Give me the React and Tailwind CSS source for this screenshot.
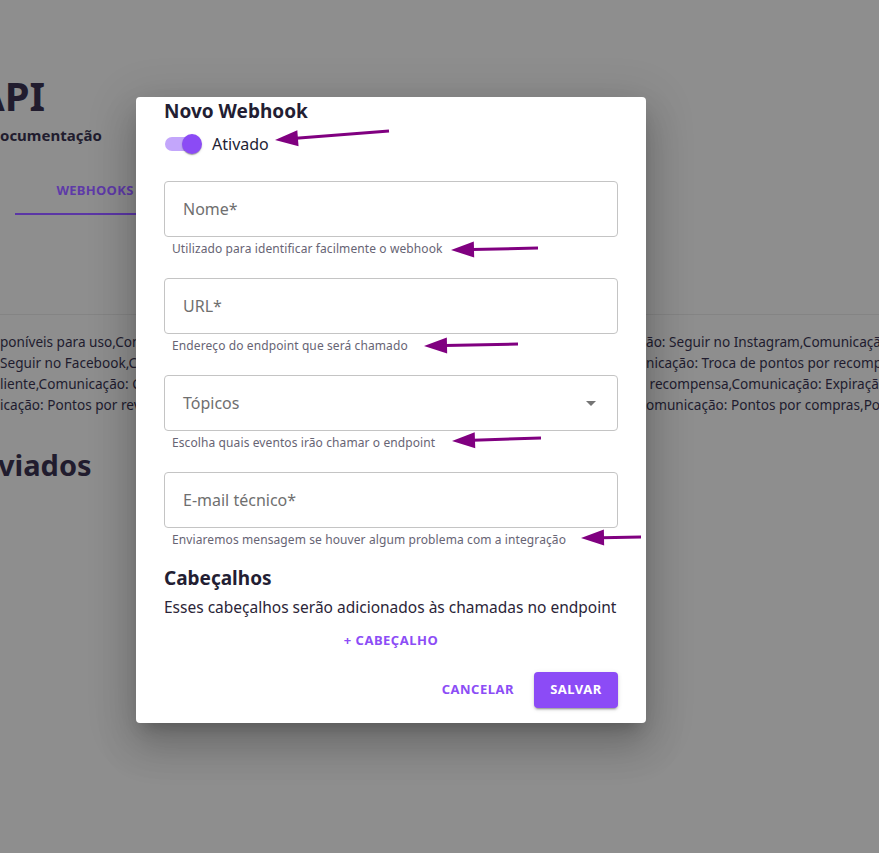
import React from 'react';

const lines = [
  ['poníveis para uso,Comunicação: Seguir no Twitter,Comunicação: Seguir no TikTok', 'ão: Seguir no Instagram,Comunicação: Seguir no TikTok'],
  ['Seguir no Facebook,Comunicação: Aniversário do cliente,Comunicação', 'nicação: Troca de pontos por recompensa'],
  ['liente,Comunicação: Cadastro de cliente,Comunicação: Troca', '\u00a0recompensa,Comunicação: Expiração de pontos'],
  ['icação: Pontos por revisão,Comunicação: Pontos por indicação', 'omunicação: Pontos por compras,Pontos'],
];

const fields = [
  { label: 'Nome*', help: 'Utilizado para identificar facilmente o webhook' },
  { label: 'URL*', help: 'Endereço do endpoint que será chamado' },
  { label: 'Tópicos', help: 'Escolha quais eventos irão chamar o endpoint', select: true },
  { label: 'E-mail técnico*', help: 'Enviaremos mensagem se houver algum problema com a integração' },
];

// annotation arrows drawn over the screenshot
const arrows = [
  [389, 131, 275, 140],
  [538, 248, 451, 250],
  [518, 344, 424, 346],
  [541, 438, 452, 441],
  [641, 537, 581, 538],
];

const Arrow = ({ x1, y1, x2, y2 }) => {
  const len = Math.hypot(x2 - x1, y2 - y1);
  const dx = (x2 - x1) / len;
  const dy = (y2 - y1) / len;
  const bx = x2 - dx * 23;
  const by = y2 - dy * 23;
  const px = -dy * 8;
  const py = dx * 8;
  const pts = `${x2},${y2} ${bx + px},${by + py} ${bx - px},${by - py}`;
  return (
    <g>
      <line x1={x1} y1={y1} x2={bx + dx * 2} y2={by + dy * 2} stroke="#800080" strokeWidth="3" />
      <polygon points={pts} fill="#800080" />
    </g>
  );
};

const Field = ({ label, help, select }) => (
  <div>
    <div className="flex h-[56px] items-center justify-between rounded border border-[#c4c4c4] pl-[18px] pr-[14px]">
      <span className="text-[16px] text-[#6f6f6f]">{label}</span>
      {select && (
        <svg viewBox="0 0 24 24" className="h-6 w-6 fill-[#757575]">
          <path d="M7 10l5 5 5-5z" />
        </svg>
      )}
    </div>
    <p className="mt-[2px] whitespace-nowrap pl-[8px] text-[12px] leading-[20px] tracking-[0.1px] text-[#676474]">{help}</p>
  </div>
);

const App = () => {
  return (
    <div className="relative h-[853px] w-full overflow-hidden bg-[#8e8e8e] font-['Noto_Sans',sans-serif] text-[#211c2e]">
      {/* Page behind the dialog */}
      <div className="pt-[72px]">
        <h1 className="-ml-[23px] whitespace-nowrap text-[40px] font-bold leading-[48px]">API</h1>
        <p className="mt-[5px] text-[15px] font-bold leading-[20px]">ocumentação</p>
        <div className="mt-[22px] ml-[15px] flex">
          <div className="flex h-[48px] w-[160px] items-center justify-center border-b-2 border-[#5b36a6] pt-[2px]">
            <span className="text-[13px] font-bold tracking-[0.3px] text-[#5e3aa8]">WEBHOOKS</span>
          </div>
        </div>
        <div className="mt-[99px] h-px bg-[#848484]" />
        <div className="mt-[16px] text-[13.6px] leading-[21px]">
          {lines.map(([left, right], i) => (
            <div key={i} className="grid grid-cols-[646px_1fr] whitespace-nowrap">
              <span className="overflow-hidden">{left}</span>
              <span className="overflow-hidden">{right}</span>
            </div>
          ))}
        </div>
        <h2 className="mt-[30px] -ml-[2px] text-[29px] font-bold leading-[40px]">viados</h2>
      </div>

      {/* Dialog */}
      <div className="absolute left-[136px] top-[97px] w-[510px] rounded bg-white px-[28px] pb-[15px] shadow-[0_11px_15px_-7px_rgba(0,0,0,0.2),0_24px_38px_3px_rgba(0,0,0,0.14),0_9px_46px_8px_rgba(0,0,0,0.12)]">
        <h3 className="text-[19px] font-bold leading-[28px] text-[#231e33]">Novo Webhook</h3>
        <div className="flex h-[38px] items-center">
          <div className="relative ml-[1px] h-[14px] w-[34px] rounded-full bg-[#c3a6fb]">
            <div className="absolute -top-[3px] left-[17px] h-[20px] w-[20px] rounded-full bg-[#8b4bf5] shadow-[0_2px_1px_-1px_rgba(0,0,0,0.2),0_1px_1px_0_rgba(0,0,0,0.14),0_1px_3px_0_rgba(0,0,0,0.12)]" />
          </div>
          <span className="ml-[13px] text-[16px] text-[#231e33]">Ativado</span>
        </div>

        <div className="mt-[18px] flex flex-col gap-[19px]">
          {fields.map((f) => (
            <Field key={f.label} {...f} />
          ))}
        </div>

        <h3 className="mt-[14px] text-[19px] font-bold leading-[28px] text-[#231e33]">Cabeçalhos</h3>
        <p className="mt-[3px] whitespace-nowrap text-[15.5px] leading-[24px] text-[#2b2538]">
          Esses cabeçalhos serão adicionados às chamadas no endpoint
        </p>
        <div className="mt-[4px] flex justify-center">
          <button className="h-[36px] px-2 text-[13px] font-bold tracking-[0.5px] text-[#8c4df6]">+ CABEÇALHO</button>
        </div>
        <div className="mt-[13px] flex justify-end gap-[12px]">
          <button className="h-[36px] px-2 text-[13px] font-bold tracking-[0.5px] text-[#8c4df6]">CANCELAR</button>
          <button className="h-[36px] w-[84px] rounded bg-[#8c4bf6] text-[13px] font-bold tracking-[0.5px] text-white shadow-[0_3px_1px_-2px_rgba(0,0,0,0.2),0_2px_2px_0_rgba(0,0,0,0.14),0_1px_5px_0_rgba(0,0,0,0.12)]">
            SALVAR
          </button>
        </div>
      </div>

      <svg viewBox="0 0 879 853" className="pointer-events-none absolute left-0 top-0 h-[853px] w-[879px]">
        {arrows.map(([x1, y1, x2, y2], i) => (
          <Arrow key={i} x1={x1} y1={y1} x2={x2} y2={y2} />
        ))}
      </svg>
    </div>
  );
};

export default App;
